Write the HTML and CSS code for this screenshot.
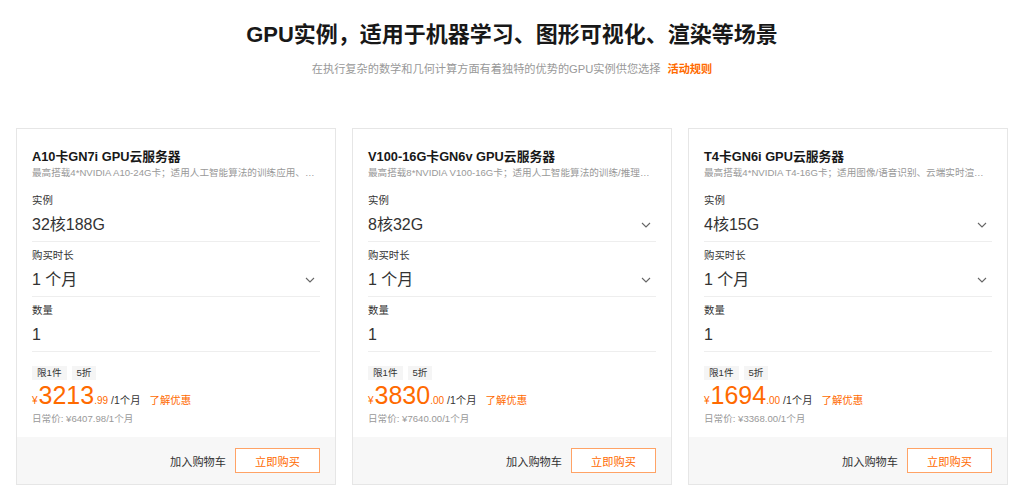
FILE: index.html
```html
<!DOCTYPE html>
<html lang="zh-CN">

<head>
     <meta charset="UTF-8" />
     <title>GPU实例</title>
     <link rel="stylesheet" href="styles.css">
</head>

<body>
     <div class="intro">
          <h1>GPU实例，适用于机器学习、图形可视化、渲染等场景</h1>
          <p>在执行复杂的数学和几何计算方面有着独特的优势的GPU实例供您选择<a href="#">活动规则</a></p>
     </div>

     <div class="cards">
          <div class="card">
               <div class="card-body">
                    <h3>A10卡GN7i GPU云服务器</h3>
                    <p class="desc">最高搭载4*NVIDIA A10-24G卡；适用人工智能算法的训练应用、AI推理、云游戏等场景</p>
                    <div class="field">
                         <div class="label">实例</div>
                         <div class="value">32核188G</div>
                    </div>
                    <div class="field">
                         <div class="label">购买时长</div>
                         <div class="value">1 个月<svg class="arrow" width="10" height="6" viewBox="0 0 10 6"><path d="M1 1 L5 5 L9 1" fill="none" stroke="#666" stroke-width="1.1"/></svg></div>
                    </div>
                    <div class="field">
                         <div class="label">数量</div>
                         <div class="value">1</div>
                    </div>
                    <div class="price">
                         <div class="tags"><span>限1件</span><span>5折</span></div>
                         <div class="now"><span class="yen">¥</span><span class="big">3213</span><span class="cents">.99</span><span class="unit">/1个月</span><a href="#">了解优惠</a></div>
                         <div class="old">日常价: ¥6407.98/1个月</div>
                    </div>
               </div>
               <div class="card-foot">
                    <span class="cart">加入购物车</span>
                    <button>立即购买</button>
               </div>
          </div>

          <div class="card">
               <div class="card-body">
                    <h3>V100-16G卡GN6v GPU云服务器</h3>
                    <p class="desc">最高搭载8*NVIDIA V100-16G卡；适用人工智能算法的训练/推理应用、科学计算等场景</p>
                    <div class="field">
                         <div class="label">实例</div>
                         <div class="value">8核32G<svg class="arrow" width="10" height="6" viewBox="0 0 10 6"><path d="M1 1 L5 5 L9 1" fill="none" stroke="#666" stroke-width="1.1"/></svg></div>
                    </div>
                    <div class="field">
                         <div class="label">购买时长</div>
                         <div class="value">1 个月<svg class="arrow" width="10" height="6" viewBox="0 0 10 6"><path d="M1 1 L5 5 L9 1" fill="none" stroke="#666" stroke-width="1.1"/></svg></div>
                    </div>
                    <div class="field">
                         <div class="label">数量</div>
                         <div class="value">1</div>
                    </div>
                    <div class="price">
                         <div class="tags"><span>限1件</span><span>5折</span></div>
                         <div class="now"><span class="yen">¥</span><span class="big">3830</span><span class="cents">.00</span><span class="unit">/1个月</span><a href="#">了解优惠</a></div>
                         <div class="old">日常价: ¥7640.00/1个月</div>
                    </div>
               </div>
               <div class="card-foot">
                    <span class="cart">加入购物车</span>
                    <button>立即购买</button>
               </div>
          </div>

          <div class="card">
               <div class="card-body">
                    <h3>T4卡GN6i GPU云服务器</h3>
                    <p class="desc">最高搭载4*NVIDIA T4-16G卡；适用图像/语音识别、云端实时渲染等场景</p>
                    <div class="field">
                         <div class="label">实例</div>
                         <div class="value">4核15G<svg class="arrow" width="10" height="6" viewBox="0 0 10 6"><path d="M1 1 L5 5 L9 1" fill="none" stroke="#666" stroke-width="1.1"/></svg></div>
                    </div>
                    <div class="field">
                         <div class="label">购买时长</div>
                         <div class="value">1 个月<svg class="arrow" width="10" height="6" viewBox="0 0 10 6"><path d="M1 1 L5 5 L9 1" fill="none" stroke="#666" stroke-width="1.1"/></svg></div>
                    </div>
                    <div class="field">
                         <div class="label">数量</div>
                         <div class="value">1</div>
                    </div>
                    <div class="price">
                         <div class="tags"><span>限1件</span><span>5折</span></div>
                         <div class="now"><span class="yen">¥</span><span class="big">1694</span><span class="cents">.00</span><span class="unit">/1个月</span><a href="#">了解优惠</a></div>
                         <div class="old">日常价: ¥3368.00/1个月</div>
                    </div>
               </div>
               <div class="card-foot">
                    <span class="cart">加入购物车</span>
                    <button>立即购买</button>
               </div>
          </div>
     </div>
</body>

</html>
```

FILE: styles.css
```css
* {
     box-sizing: border-box;
     margin: 0;
     padding: 0;
}

body {
     font-family: "Liberation Sans", "Noto Sans CJK SC", sans-serif;
     background: #fff;
     color: #333;
}

.intro {
     text-align: center;
     padding-top: 20px;
}

.intro h1 {
     font-size: 22px;
     line-height: 30px;
     font-weight: bold;
     color: #181818;
}

.intro p {
     margin-top: 11px;
     font-size: 11.2px;
     line-height: 16px;
     color: #999;
}

.intro p a {
     color: #ff6a00;
     font-weight: bold;
     text-decoration: none;
     margin-left: 7px;
}

.cards {
     display: flex;
     gap: 16px;
     width: 992px;
     margin: 51px auto 0;
}

.card {
     flex: 1;
     min-width: 0;
     border: 1px solid #e6e6e6;
     background: #fff;
}

.card-body {
     padding: 19px 15px 0;
}

.card h3 {
     font-size: 12.8px;
     line-height: 18px;
     font-weight: bold;
     color: #181818;
}

.desc {
     font-size: 9.6px;
     line-height: 14px;
     color: #999;
     white-space: nowrap;
     overflow: hidden;
     text-overflow: ellipsis;
     margin-bottom: 7px;
}

.field {
     padding: 6px 0 4px;
     border-bottom: 1px solid #eee;
}

.label {
     font-size: 10.4px;
     line-height: 16px;
     color: #333;
}

.value {
     display: flex;
     justify-content: space-between;
     align-items: center;
     margin-top: 4px;
     font-size: 16px;
     line-height: 24px;
     color: #333;
}

.arrow {
     margin-right: 5px;
}

.price {
     padding: 14px 0 11px;
}

.tags {
     display: flex;
     gap: 5px;
}

.tags span {
     background: #f5f5f5;
     font-size: 9.6px;
     line-height: 14px;
     padding: 0 5px;
     color: #333;
}

.now {
     display: flex;
     align-items: baseline;
     margin-top: 2px;
     height: 26px;
     line-height: 26px;
     color: #ff6a00;
     white-space: nowrap;
}

.yen {
     font-size: 10px;
     margin-right: 1px;
}

.big {
     font-size: 25px;
}

.cents {
     font-size: 10px;
}

.unit {
     font-size: 10.4px;
     color: #333;
     margin-left: 3px;
}

.now a {
     font-size: 10.4px;
     color: #ff6a00;
     text-decoration: none;
     margin-left: 9px;
}

.old {
     margin-top: 4px;
     font-size: 9.6px;
     line-height: 14px;
     color: #999;
}

.card-foot {
     display: flex;
     justify-content: flex-end;
     align-items: center;
     gap: 9px;
     height: 47px;
     padding-right: 15px;
     background: #f7f7f7;
}

.cart {
     font-size: 11.2px;
     color: #333;
}

.card-foot button {
     width: 85px;
     height: 25px;
     background: #fff;
     border: 1px solid #ffa366;
     color: #ff6a00;
     font-family: inherit;
     font-size: 11.2px;
}
```
